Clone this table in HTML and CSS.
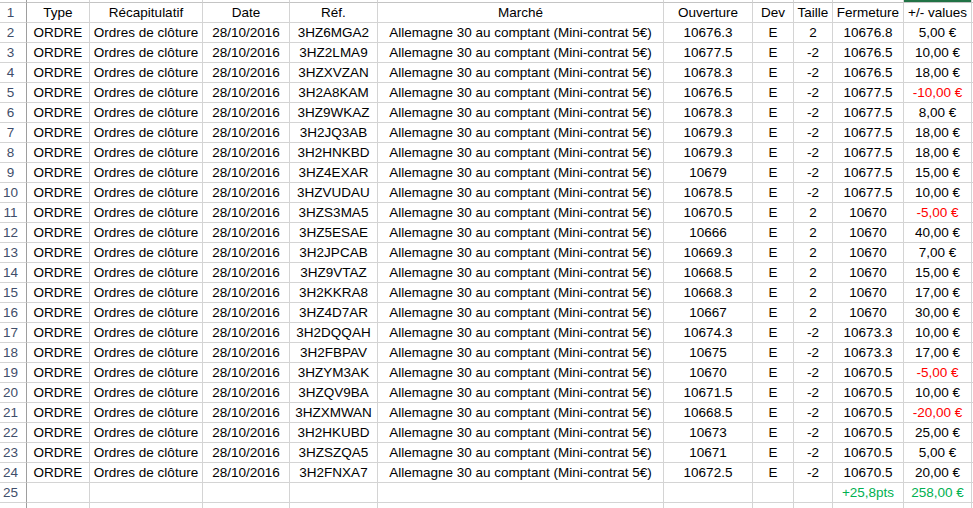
FILE: index.html
```html
<!DOCTYPE html>
<html lang="fr">
<head>
<meta charset="utf-8">
<link rel="stylesheet" href="styles.css">
<title>Feuille</title>
</head>
<body>
<div class="sheet">
  <div class="row colhead"><div class="c h"></div><div class="c"></div><div class="c"></div><div class="c"></div><div class="c"></div><div class="c"></div><div class="c"></div><div class="c"></div><div class="c"></div><div class="c"></div><div class="c sel"></div><div class="c"></div></div>
  <div class="row"><div class="c h">1</div><div class="c">Type</div><div class="c">Récapitulatif</div><div class="c">Date</div><div class="c">Réf.</div><div class="c">Marché</div><div class="c">Ouverture</div><div class="c">Dev</div><div class="c">Taille</div><div class="c">Fermeture</div><div class="c">+/- values</div><div class="c"></div></div>
  <div class="row"><div class="c h">2</div><div class="c">ORDRE</div><div class="c">Ordres de clôture</div><div class="c">28/10/2016</div><div class="c">3HZ6MGA2</div><div class="c">Allemagne 30 au comptant (Mini-contrat 5€)</div><div class="c">10676.3</div><div class="c">E</div><div class="c">2</div><div class="c">10676.8</div><div class="c">5,00 €</div><div class="c"></div></div>
  <div class="row"><div class="c h">3</div><div class="c">ORDRE</div><div class="c">Ordres de clôture</div><div class="c">28/10/2016</div><div class="c">3HZ2LMA9</div><div class="c">Allemagne 30 au comptant (Mini-contrat 5€)</div><div class="c">10677.5</div><div class="c">E</div><div class="c">-2</div><div class="c">10676.5</div><div class="c">10,00 €</div><div class="c"></div></div>
  <div class="row"><div class="c h">4</div><div class="c">ORDRE</div><div class="c">Ordres de clôture</div><div class="c">28/10/2016</div><div class="c">3HZXVZAN</div><div class="c">Allemagne 30 au comptant (Mini-contrat 5€)</div><div class="c">10678.3</div><div class="c">E</div><div class="c">-2</div><div class="c">10676.5</div><div class="c">18,00 €</div><div class="c"></div></div>
  <div class="row"><div class="c h">5</div><div class="c">ORDRE</div><div class="c">Ordres de clôture</div><div class="c">28/10/2016</div><div class="c">3H2A8KAM</div><div class="c">Allemagne 30 au comptant (Mini-contrat 5€)</div><div class="c">10676.5</div><div class="c">E</div><div class="c">-2</div><div class="c">10677.5</div><div class="c neg">-10,00 €</div><div class="c"></div></div>
  <div class="row"><div class="c h">6</div><div class="c">ORDRE</div><div class="c">Ordres de clôture</div><div class="c">28/10/2016</div><div class="c">3HZ9WKAZ</div><div class="c">Allemagne 30 au comptant (Mini-contrat 5€)</div><div class="c">10678.3</div><div class="c">E</div><div class="c">-2</div><div class="c">10677.5</div><div class="c">8,00 €</div><div class="c"></div></div>
  <div class="row"><div class="c h">7</div><div class="c">ORDRE</div><div class="c">Ordres de clôture</div><div class="c">28/10/2016</div><div class="c">3H2JQ3AB</div><div class="c">Allemagne 30 au comptant (Mini-contrat 5€)</div><div class="c">10679.3</div><div class="c">E</div><div class="c">-2</div><div class="c">10677.5</div><div class="c">18,00 €</div><div class="c"></div></div>
  <div class="row"><div class="c h">8</div><div class="c">ORDRE</div><div class="c">Ordres de clôture</div><div class="c">28/10/2016</div><div class="c">3H2HNKBD</div><div class="c">Allemagne 30 au comptant (Mini-contrat 5€)</div><div class="c">10679.3</div><div class="c">E</div><div class="c">-2</div><div class="c">10677.5</div><div class="c">18,00 €</div><div class="c"></div></div>
  <div class="row"><div class="c h">9</div><div class="c">ORDRE</div><div class="c">Ordres de clôture</div><div class="c">28/10/2016</div><div class="c">3HZ4EXAR</div><div class="c">Allemagne 30 au comptant (Mini-contrat 5€)</div><div class="c">10679</div><div class="c">E</div><div class="c">-2</div><div class="c">10677.5</div><div class="c">15,00 €</div><div class="c"></div></div>
  <div class="row"><div class="c h">10</div><div class="c">ORDRE</div><div class="c">Ordres de clôture</div><div class="c">28/10/2016</div><div class="c">3HZVUDAU</div><div class="c">Allemagne 30 au comptant (Mini-contrat 5€)</div><div class="c">10678.5</div><div class="c">E</div><div class="c">-2</div><div class="c">10677.5</div><div class="c">10,00 €</div><div class="c"></div></div>
  <div class="row"><div class="c h">11</div><div class="c">ORDRE</div><div class="c">Ordres de clôture</div><div class="c">28/10/2016</div><div class="c">3HZS3MA5</div><div class="c">Allemagne 30 au comptant (Mini-contrat 5€)</div><div class="c">10670.5</div><div class="c">E</div><div class="c">2</div><div class="c">10670</div><div class="c neg">-5,00 €</div><div class="c"></div></div>
  <div class="row"><div class="c h">12</div><div class="c">ORDRE</div><div class="c">Ordres de clôture</div><div class="c">28/10/2016</div><div class="c">3HZ5ESAE</div><div class="c">Allemagne 30 au comptant (Mini-contrat 5€)</div><div class="c">10666</div><div class="c">E</div><div class="c">2</div><div class="c">10670</div><div class="c">40,00 €</div><div class="c"></div></div>
  <div class="row"><div class="c h">13</div><div class="c">ORDRE</div><div class="c">Ordres de clôture</div><div class="c">28/10/2016</div><div class="c">3H2JPCAB</div><div class="c">Allemagne 30 au comptant (Mini-contrat 5€)</div><div class="c">10669.3</div><div class="c">E</div><div class="c">2</div><div class="c">10670</div><div class="c">7,00 €</div><div class="c"></div></div>
  <div class="row"><div class="c h">14</div><div class="c">ORDRE</div><div class="c">Ordres de clôture</div><div class="c">28/10/2016</div><div class="c">3HZ9VTAZ</div><div class="c">Allemagne 30 au comptant (Mini-contrat 5€)</div><div class="c">10668.5</div><div class="c">E</div><div class="c">2</div><div class="c">10670</div><div class="c">15,00 €</div><div class="c"></div></div>
  <div class="row"><div class="c h">15</div><div class="c">ORDRE</div><div class="c">Ordres de clôture</div><div class="c">28/10/2016</div><div class="c">3H2KKRA8</div><div class="c">Allemagne 30 au comptant (Mini-contrat 5€)</div><div class="c">10668.3</div><div class="c">E</div><div class="c">2</div><div class="c">10670</div><div class="c">17,00 €</div><div class="c"></div></div>
  <div class="row"><div class="c h">16</div><div class="c">ORDRE</div><div class="c">Ordres de clôture</div><div class="c">28/10/2016</div><div class="c">3HZ4D7AR</div><div class="c">Allemagne 30 au comptant (Mini-contrat 5€)</div><div class="c">10667</div><div class="c">E</div><div class="c">2</div><div class="c">10670</div><div class="c">30,00 €</div><div class="c"></div></div>
  <div class="row"><div class="c h">17</div><div class="c">ORDRE</div><div class="c">Ordres de clôture</div><div class="c">28/10/2016</div><div class="c">3H2DQQAH</div><div class="c">Allemagne 30 au comptant (Mini-contrat 5€)</div><div class="c">10674.3</div><div class="c">E</div><div class="c">-2</div><div class="c">10673.3</div><div class="c">10,00 €</div><div class="c"></div></div>
  <div class="row"><div class="c h">18</div><div class="c">ORDRE</div><div class="c">Ordres de clôture</div><div class="c">28/10/2016</div><div class="c">3H2FBPAV</div><div class="c">Allemagne 30 au comptant (Mini-contrat 5€)</div><div class="c">10675</div><div class="c">E</div><div class="c">-2</div><div class="c">10673.3</div><div class="c">17,00 €</div><div class="c"></div></div>
  <div class="row"><div class="c h">19</div><div class="c">ORDRE</div><div class="c">Ordres de clôture</div><div class="c">28/10/2016</div><div class="c">3HZYM3AK</div><div class="c">Allemagne 30 au comptant (Mini-contrat 5€)</div><div class="c">10670</div><div class="c">E</div><div class="c">-2</div><div class="c">10670.5</div><div class="c neg">-5,00 €</div><div class="c"></div></div>
  <div class="row"><div class="c h">20</div><div class="c">ORDRE</div><div class="c">Ordres de clôture</div><div class="c">28/10/2016</div><div class="c">3HZQV9BA</div><div class="c">Allemagne 30 au comptant (Mini-contrat 5€)</div><div class="c">10671.5</div><div class="c">E</div><div class="c">-2</div><div class="c">10670.5</div><div class="c">10,00 €</div><div class="c"></div></div>
  <div class="row"><div class="c h">21</div><div class="c">ORDRE</div><div class="c">Ordres de clôture</div><div class="c">28/10/2016</div><div class="c">3HZXMWAN</div><div class="c">Allemagne 30 au comptant (Mini-contrat 5€)</div><div class="c">10668.5</div><div class="c">E</div><div class="c">-2</div><div class="c">10670.5</div><div class="c neg">-20,00 €</div><div class="c"></div></div>
  <div class="row"><div class="c h">22</div><div class="c">ORDRE</div><div class="c">Ordres de clôture</div><div class="c">28/10/2016</div><div class="c">3H2HKUBD</div><div class="c">Allemagne 30 au comptant (Mini-contrat 5€)</div><div class="c">10673</div><div class="c">E</div><div class="c">-2</div><div class="c">10670.5</div><div class="c">25,00 €</div><div class="c"></div></div>
  <div class="row"><div class="c h">23</div><div class="c">ORDRE</div><div class="c">Ordres de clôture</div><div class="c">28/10/2016</div><div class="c">3HZSZQA5</div><div class="c">Allemagne 30 au comptant (Mini-contrat 5€)</div><div class="c">10671</div><div class="c">E</div><div class="c">-2</div><div class="c">10670.5</div><div class="c">5,00 €</div><div class="c"></div></div>
  <div class="row"><div class="c h">24</div><div class="c">ORDRE</div><div class="c">Ordres de clôture</div><div class="c">28/10/2016</div><div class="c">3H2FNXA7</div><div class="c">Allemagne 30 au comptant (Mini-contrat 5€)</div><div class="c">10672.5</div><div class="c">E</div><div class="c">-2</div><div class="c">10670.5</div><div class="c">20,00 €</div><div class="c"></div></div>
  <div class="row"><div class="c h">25</div><div class="c"></div><div class="c"></div><div class="c"></div><div class="c"></div><div class="c"></div><div class="c"></div><div class="c"></div><div class="c"></div><div class="c pos">+25,8pts</div><div class="c pos">258,00 €</div><div class="c"></div></div>
  <div class="row"><div class="c h"></div><div class="c"></div><div class="c"></div><div class="c"></div><div class="c"></div><div class="c"></div><div class="c"></div><div class="c"></div><div class="c"></div><div class="c"></div><div class="c"></div><div class="c"></div></div>
</div>
</body>
</html>
```
FILE: styles.css
```css
html, body {
  margin: 0;
  padding: 0;
  background: #ffffff;
  overflow: hidden;
}

.sheet {
  width: 973px;
  font-family: "Liberation Sans", Arial, sans-serif;
  font-size: 13.5px;
  color: #000000;
}

.row {
  display: grid;
  grid-template-columns: 27px 63px 113px 87px 88px 286px 89px 41px 39px 71px 68px 40px;
  height: 20px;
}

.c {
  box-sizing: border-box;
  border-right: 1px solid #d4d4d4;
  border-bottom: 1px solid #d4d4d4;
  text-align: center;
  line-height: 19px;
  white-space: nowrap;
  overflow: hidden;
}

.c.h {
  border-right-color: #9e9e9e;
  color: #3f4e6a;
  padding-right: 5px;
}

.colhead {
  height: 3px;
}

.colhead .c {
  border-bottom-color: #c4c4c4;
}

.colhead .sel {
  background: #217346;
  border-bottom-color: #c4c4c4;
}

.neg {
  color: #ff0000;
}

.pos {
  color: #00b050;
}
```
